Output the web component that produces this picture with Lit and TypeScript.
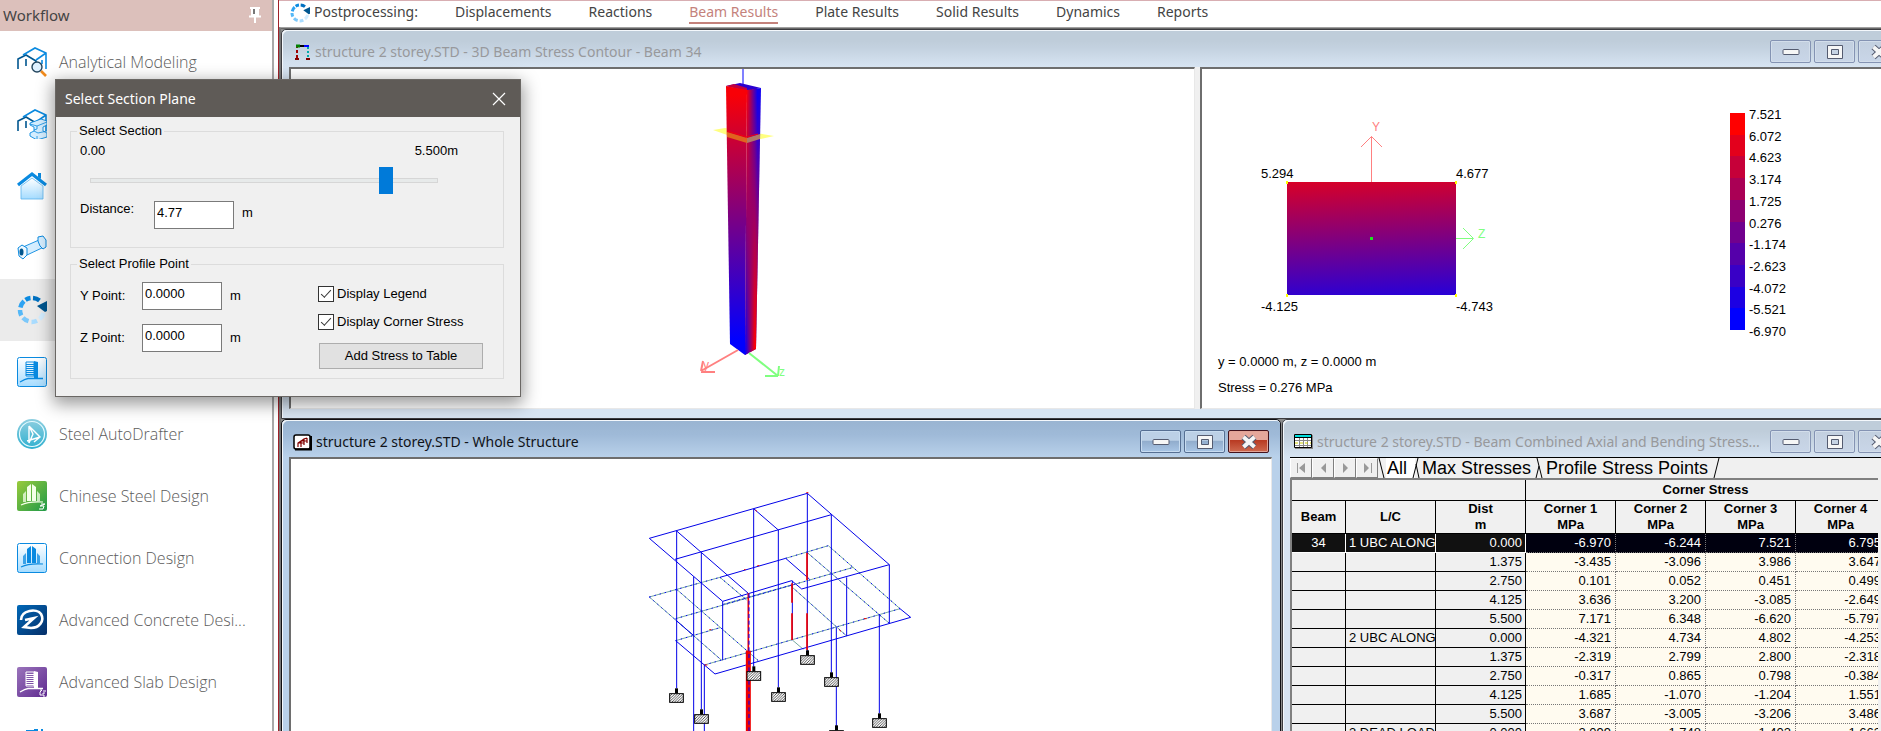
import { LitElement, html, css, svg } from "lit";
import { customElement, state } from "lit/decorators.js";

const BLUE = "#0a8ae0";

const frameIcon = svg`
  <path d="M1 22V12L9 8l10 6v8M9 12v7" stroke="#00568f" fill="none" stroke-width="1.6"/>
  <path d="M6 8L18 1l11 5v16M29 6l-10 7M25 13v4" stroke="${BLUE}" fill="none" stroke-width="1.6"/>`;

const ring = svg`
  <g fill="none" stroke-width="4.500">
    <path d="M8.500 4.800A12 12 0 0 1 13.500 3" stroke="${BLUE}"/>
    <path d="M16 3a12 12 0 0 1 6.500 2.500" stroke="#0070c0"/>
    <path d="M3.400 12.500A12 12 0 0 1 7 6.200" stroke="#2ea3f2"/>
    <path d="M4.200 20.500A12 12 0 0 1 3 15" stroke="#55b8f7"/>
    <path d="M11.500 26.200A12 12 0 0 1 6 22.800" stroke="#7cc8fa"/>
    <path d="M20 25.800a12 12 0 0 1-5.500 1.200" stroke="#a9dcff"/>
    <path d="M26.500 18a12 12 0 0 1-4 6" stroke="#d3edff"/>
  </g>
  <path d="M20 11l10-5v10l-2 1z" fill="#00568f"/>`;

const tile = (fill: string, stroke: string) =>
  svg`<rect x=".5" y=".5" width="29" height="29" rx="2" fill="${fill}" stroke="${stroke}"/>`;

const towers = (c: string) => svg`
  <path d="M10 20V6l4-3v17zM15 3l4 3v14h-4z" fill="${c}"/>
  <path d="M6 21v-8l3-3v11zM20 10l3 3v7l-3 .5z" fill="${c}" opacity=".75"/>
  <path d="M4 24q8-4 22-3" stroke="${c}" fill="none" stroke-width="1.200"/>`;

const slab = (c: string) => svg`
  <path d="M9 5h8v14H9z" fill="none" stroke="${c}"/>
  <path d="M9 7.500h8M9 9.500h8M9 11.500h8M9 13.500h8M9 15.500h8M9 17.500h8" stroke="${c}"/>
  <path d="M17 4l4 1v16h-4z" fill="${c}"/>
  <path d="M3 25q5-3 8-3.500h10l5 0" stroke="${c}" fill="none" stroke-width="1.300"/>`;

const icons: Record<string, unknown> = {
  analytical: svg`${frameIcon}
    <path d="M24 24l5 5" stroke="#f08a1c" stroke-width="2.600"/>
    <circle cx="20" cy="20" r="5" fill="#dff1ff" stroke="#24465e" stroke-width="1.400"/>`,
  physical: svg`${frameIcon}
    <path d="M13 14l11-4 6 2v4l-4 2v4l4 2v4l-10 3-7-4v-3l4-2v-4l-4-2z" fill="#d5eeff" stroke="${BLUE}" stroke-width=".9"/>
    <path d="M13 15l7 2 10-4M20 17v3l-3 1M17 22l4 2 9-2M20 27v3" stroke="${BLUE}" fill="none" stroke-width=".8"/>`,
  building: svg`
    <path d="M4 15L15 7l11 8v13H4z" fill="url(#ice)" stroke="#5cb4ee" stroke-width=".8"/>
    <path d="M1 14L15 3l14 11" stroke="${BLUE}" fill="none" stroke-width="3.200"/>
    <path d="M21 2h3v6l-3-2z" fill="${BLUE}"/>`,
  piping: svg`
    <path d="M6 14l16-7 5 7-17 8z" fill="#d5eeff" stroke="${BLUE}" stroke-width=".9"/>
    <path d="M21 4l5-1 3 4v7l-3 2-3-3-2-5z" fill="#d5eeff" stroke="${BLUE}"/>
    <path d="M1 15l4-3 5 3v7l-4 4-4-3z" fill="#eef8ff" stroke="${BLUE}"/>
    <ellipse cx="4.500" cy="19" rx="2" ry="3.500" fill="#00568f"/>`,
  post: ring,
  foundation: svg`${tile("url(#ice)", BLUE)}${slab(BLUE)}`,
  drafter: svg`
    <circle cx="15" cy="15" r="15" fill="url(#teal)"/>
    <circle cx="15" cy="15" r="12.500" fill="none" stroke="#e8fbff" stroke-width="1.200"/>
    <path d="M12 7v17l4-9zM12 7l11 11-6 5M10 22l13-4" fill="none" stroke="#fff" stroke-width="1.400"/>`,
  chinese: svg`<rect width="30" height="30" rx="2" fill="url(#green)"/>${towers("#f4ffe8")}
    <path d="M24 23h4l-5 2h4l-1 3h-4" stroke="#fff" fill="none"/>`,
  connection: svg`${tile("url(#ice)", BLUE)}${towers(BLUE)}`,
  concrete: svg`<rect width="30" height="30" rx="2" fill="url(#navy)"/>
    <path d="M4 15C4 5 20 3 24 9c4 7-2 14-10 14l-7-1 10-9-9 2" fill="none" stroke="#fff" stroke-width="2.600"/>`,
  slab: svg`<rect width="30" height="30" rx="2" fill="url(#violet)"/>${slab("#fff")}
    <path d="M23 23h2l-2 2v3h2M26 24h3M28 26h-2v3h2" stroke="#fff" fill="none"/>`,
  more: svg`<path d="M17 0h4v30H9V1h8z" fill="${BLUE}"/><path d="M24 0h2v30h-2z" fill="${BLUE}"/>`,
};

const icon = (name: string) => html`<svg class="icon" viewBox="0 0 30 30" aria-hidden="true">${icons[name]}</svg>`;

const workflow = [
  { icon: "analytical", label: "Analytical Modeling", shown: true },
  { icon: "physical", label: "Physical", shown: false },
  { icon: "building", label: "Building", shown: false },
  { icon: "piping", label: "Piping", shown: false },
  { icon: "post", label: "Postprocessing", shown: false, active: true },
  { icon: "foundation", label: "Foundation", shown: false },
  { icon: "drafter", label: "Steel AutoDrafter", shown: true },
  { icon: "chinese", label: "Chinese Steel Design", shown: true },
  { icon: "connection", label: "Connection Design", shown: true },
  { icon: "concrete", label: "Advanced Concrete Desi...", shown: true },
  { icon: "slab", label: "Advanced Slab Design", shown: true },
  { icon: "more", label: "More", shown: false },
];

const tabs = ["Displacements", "Reactions", "Beam Results", "Plate Results", "Solid Results", "Dynamics", "Reports"];

const legend = ["7.521", "6.072", "4.623", "3.174", "1.725", "0.276", "-1.174", "-2.623", "-4.072", "-5.521", "-6.970"];
const bands = ["#ff0000", "#e3001c", "#c60039", "#aa0055", "#8e0071", "#71008e", "#5500aa", "#3900c6", "#1c00e3", "#0000ff"];

const rows: string[][] = [
  ["34", "1 UBC ALONG", "0.000", "-6.970", "-6.244", "7.521", "6.795"],
  ["", "", "1.375", "-3.435", "-3.096", "3.986", "3.647"],
  ["", "", "2.750", "0.101", "0.052", "0.451", "0.499"],
  ["", "", "4.125", "3.636", "3.200", "-3.085", "-2.649"],
  ["", "", "5.500", "7.171", "6.348", "-6.620", "-5.797"],
  ["", "2 UBC ALONG", "0.000", "-4.321", "4.734", "4.802", "-4.253"],
  ["", "", "1.375", "-2.319", "2.799", "2.800", "-2.318"],
  ["", "", "2.750", "-0.317", "0.865", "0.798", "-0.384"],
  ["", "", "4.125", "1.685", "-1.070", "-1.204", "1.551"],
  ["", "", "5.500", "3.687", "-3.005", "-3.206", "3.486"],
  ["", "3 DEAD LOAD", "0.000", "2.099", "1.748", "-1.402", "-1.663"],
];

const beamScene = svg`
  <defs>
    <linearGradient id="left" gradientUnits="userSpaceOnUse" x1="736" y1="95" x2="742" y2="340">
      <stop offset="0" stop-color="#f80007"/><stop offset="1" stop-color="#0000ff"/>
    </linearGradient>
    <linearGradient id="rb" gradientUnits="userSpaceOnUse" x1="747" y1="0" x2="760" y2="0">
      <stop offset="0" stop-color="#f00010"/><stop offset=".8" stop-color="#1000f0"/>
    </linearGradient>
    <linearGradient id="br" gradientUnits="userSpaceOnUse" x1="745" y1="0" x2="756" y2="0">
      <stop offset="0" stop-color="#0000ff"/><stop offset=".9" stop-color="#ff0000"/>
    </linearGradient>
    <linearGradient id="fade" gradientUnits="userSpaceOnUse" x1="0" y1="95" x2="0" y2="350">
      <stop offset="0" stop-color="#000"/><stop offset="1" stop-color="#fff"/>
    </linearGradient>
    <mask id="down" maskUnits="userSpaceOnUse" x="700" y="70" width="80" height="300">
      <rect x="700" y="70" width="80" height="300" fill="url(#fade)"/>
    </mask>
  </defs>
  <g transform="translate(-291 -69)">
    <path d="M743 69v16" stroke="#8080ff" stroke-width="2"/>
    <path d="M713 130l12-2 49 8-27 6z" fill="#ffff80"/>
    <path d="M726 86l14-3 21 5-14 3z" fill="#2a00d0"/>
    <path d="M726 86l8-2 13 4v3z" fill="#c00040"/>
    <path d="M726 86l21 4-2 265-15-11z" fill="url(#left)"/>
    <path d="M747 90l14-2-5 261-11 6z" fill="url(#rb)"/>
    <path d="M747 90l14-2-5 261-11 6z" fill="url(#br)" mask="url(#down)"/>
    <path d="M727 132l20 6v5l-20-6z" fill="#e0641e"/>
    <path d="M747 138l13-4v5l-13 4z" fill="#b07868"/>
    <path d="M727 131l20 6 11-3" stroke="#f20010" stroke-width="1" fill="none"/>
    <path d="M738 350l-37 21M701 371l2-10M701 372h14" stroke="#ff8080" stroke-width="2" fill="none"/>
    <path d="M749 353l29 23M765 376h13M778 376l1-10" stroke="#80ff80" stroke-width="2" fill="none"/>
    <text x="703" y="369" class="axis" fill="#ff8080">y</text>
    <text x="779" y="376" class="axis" fill="#80ff80">z</text>
  </g>`;

const sectionScene = svg`
  <defs>
    <linearGradient id="section" gradientUnits="userSpaceOnUse" x1="1287" y1="182" x2="1292" y2="302">
      <stop offset="0" stop-color="#d80027"/><stop offset="1" stop-color="#2700d8"/>
    </linearGradient>
  </defs>
  <g transform="translate(-1202 -69)">
    <path d="M1371.500 136.500V182M1361 147l10.500-10.500L1382 147" stroke="#ff8080" fill="none"/>
    <path d="M1456 238.500h17M1463 228l10.500 10.500L1463 249" stroke="#80ff80" fill="none"/>
    <text x="1372" y="131" class="axis" fill="#ff8080">Y</text>
    <text x="1478" y="238" class="axis" fill="#80ff80">Z</text>
    <rect x="1287" y="182" width="169" height="113" fill="url(#section)"/>
    <path d="M1286 181h2v3h-2zM1455 181h2v3h-2zM1286 294h2v3h-2zM1455 294h2v3h-2z" fill="#ff0"/>
    <rect x="1370" y="237" width="3" height="3" fill="#20e020"/>
    <text x="1261" y="178">5.294</text>
    <text x="1456" y="178">4.677</text>
    <text x="1261" y="311">-4.125</text>
    <text x="1456" y="311">-4.743</text>
    <text x="1218" y="366">y = 0.0000 m, z = 0.0000 m</text>
    <text x="1218" y="392">Stress = 0.276 MPa</text>
    ${bands.map((c, i) => svg`<rect x="1730" y="${Math.round(113 + i * 21.7)}" width="15" height="22" fill="${c}"/>`)}
    ${legend.map((t, i) => svg`<text x="1749" y="${Math.round(119 + i * 21.7)}">${t}</text>`)}
  </g>`;

const supports = [[88, 670], [163, 733], [320, 604], [394, 667], [481, 556], [553, 622], [697, 745], [568, 781]];

const structureScene = svg`
  <defs>
    <pattern id="hatch" width="8" height="8" patternUnits="userSpaceOnUse">
      <rect width="8" height="8" fill="#fff"/>
      <path d="M-2 10L10 -2M-2 2L2 -2M6 10L10 6" stroke="#000" stroke-width="2"/>
    </pattern>
  </defs>
  <g transform="translate(349 11) scale(.33333)" fill="none" stroke-width="3">
    <path stroke="#74a8a0" d="M28 381L240 322M437 265L565 227L780 416M28 381L107 450L245 571M107 446L184 424L640 292M107 512L240 473M110 358L355 572M193 585L780 416M240 322L320 390M502 248L748 460M455 350L620 498M457 510L490 538M250 403L455 345"/>
    <path stroke="#0000ff" stroke-dasharray="4 12" d="M28 381L240 322M437 265L565 227L780 416M28 381L107 450L245 571M107 446L184 424L640 292M107 512L240 473M110 358L355 572M193 585L780 416M240 322L320 390M502 248L748 460M455 350L620 498M250 403L455 345"/>
    <path stroke="#0000e8" d="M28 205L502 70L748 284L485 357L455 332L248 394zM105 268L574 134M110 183L325 370M342 117L415 180M240 322L437 265L508 327M107 512L225 612L812 442L780 416M107 450L160 496M110 183V655M161 320V783M184 248V718M193 585V783M248 394V571M341 117V590M415 180V652M502 70V545M457 332V510M574 134V608M589 472V768M620 322V498M718 433V730M748 284V460"/>
    <path stroke="#f00000" stroke-width="5" d="M501 248V330M501 430V540M456 340V398M456 430V510M325 370V545"/>
    <path stroke="#f00000" stroke-width="15" d="M325 542V800"/>
    <path stroke="#0000ff" stroke-dasharray="12 8" d="M327 372V800"/>
    <path stroke="#f00000" d="M499 68h6M346 120l5 4M312 299h5M352 287h6M208 479h6M672 446h8M598 480l5 4M194 585h8"/>
    ${supports.map(
      ([x, y]) => svg`<path d="M${x + 17} ${y - 15}h9v15h-9z" fill="#000"/>
        <rect x="${x + 1}" y="${y + 1}" width="41" height="26" fill="url(#hatch)" stroke="#000"/>`
    )}
  </g>`;

@customElement("mdi-window")
export class MdiWindow extends LitElement {
  static properties = { heading: {}, active: { type: Boolean, reflect: true } };
  declare heading: string;
  declare active: boolean;

  static styles = css`
    :host { display: flex; flex-direction: column; min-width: 0; box-sizing: border-box; border: 1px solid #3c3c40; border-radius: 5px 5px 0 0; padding: 0 8px 9px 7px; background: #d7e4f2; box-shadow: inset 1px 1px #f4f8fc; font-family: "Noto Sans", "Open Sans", sans-serif; }
    :host([active]) { background: #b9d1ea; border-color: #101014; }
    .bar { height: 37px; box-sizing: border-box; margin: 0 -8px 0 -7px; padding: 6px 11px 0 11px; display: flex; align-items: center; gap: 4px; background: linear-gradient(#bfcdda 30%, #c4d2e0 50%, #d7e4f2); border-radius: 5px 5px 0 0; box-shadow: inset 1px 1px #f4f8fc; flex: none; }
    :host([active]) .bar { background: linear-gradient(#99b4d1, #9fbad8 40%, #b9d1ea); }
    .heading { flex: 1; min-width: 0; margin: 0; font-weight: 400; font-size: 14px; line-height: 20px; color: #98999c; white-space: nowrap; overflow: hidden; text-overflow: ellipsis; }
    :host([active]) .heading { color: #101318; }
    .controls { display: flex; gap: 3px; flex: none; }
    .control { width: 41px; height: 23px; padding: 0; display: grid; place-items: center; border: 1px solid #8493b3; border-radius: 2px; background: linear-gradient(#c2cfdf, #c9d6e8); box-shadow: inset 0 0 0 1px #d3deeb; }
    :host([active]) .control { border-color: #566f93; background: linear-gradient(#bcd0e6 45%, #90abcb 46%, #a9c6e6); box-shadow: inset 0 0 0 1px #c8dcf0; }
    :host([active]) .control.close { border-color: #43121c; background: linear-gradient(#e5a79b 42%, #b83a22 44%, #cf6a50); box-shadow: inset 0 0 0 1px #e2a497; }
  `;

  render() {
    return html`
      <header class="bar">
        <slot name="glyph"></slot>
        <h2 class="heading">${this.heading}</h2>
        <div class="controls">
          <button class="control" aria-label="Minimize"><svg width="18" height="8"><rect x="1" y="1.500" width="16" height="5" rx="1" fill="#f6f6f6" stroke="#545b70"/></svg></button>
          <button class="control" aria-label="Maximize"><svg width="18" height="16"><path fill-rule="evenodd" d="M1.500 1.500h15v13h-15zM5.500 5.500h7v5h-7z" fill="#f6f6f6" stroke="#545b70"/></svg></button>
          <button class="control close" aria-label="Close"><svg width="20" height="16"><path d="M4.500 3l11 10M15.500 3l-11 10" stroke="#545b70" stroke-width="6"/><path d="M4.500 3l11 10M15.500 3l-11 10" stroke="#f6f6f6" stroke-width="4"/></svg></button>
        </div>
      </header>
      <slot></slot>`;
  }
}

@customElement("section-dialog")
export class SectionDialog extends LitElement {
  @state() private distance = 4.77;

  static styles = css`
    :host { display: block; width: 466px; box-sizing: border-box; border: 1px solid #6a6764; background: #f0f0f0; box-shadow: 0 5px 16px 2px rgba(0, 0, 0, 0.4); font: 13px/16px "Liberation Sans", Arial, sans-serif; color: #000; }
    .title { height: 37px; padding: 0 14px 0 9px; display: flex; align-items: center; justify-content: space-between; background: #5f5b57; color: #fff; font-family: "Noto Sans", "Open Sans", sans-serif; }
    .name { margin: 0; font-size: 14px; line-height: 20px; font-weight: 400; }
    .shut { border: 0; padding: 0; background: none; width: 14px; height: 14px; }
    .shut svg { display: block; }
    .body { padding: 6px 16px 17px 14px; display: grid; gap: 8px; }
    .group { margin: 0; min-width: 0; border: 1px solid #dcdcdc; padding: 4px 9px 18px; }
    .group.points { padding: 10px 9px 8px; display: grid; grid-template-columns: 238px auto; justify-content: start; }
    .caption { padding: 0 2px; margin-left: -3px; }
    .ends { display: flex; justify-content: space-between; margin-right: 36px; }
    .slider { -webkit-appearance: none; appearance: none; display: block; width: 348px; height: 27px; margin: 8px 0 7px 10px; background: none; }
    .slider::-webkit-slider-runnable-track { height: 5px; box-sizing: border-box; border: 1px solid #d6d6d6; background: #e7eaea; }
    .slider::-webkit-slider-thumb { -webkit-appearance: none; width: 14px; height: 27px; margin-top: -12px; background: #007ad9; border-radius: 0; }
    .line { display: flex; gap: 8px; align-items: flex-start; }
    .line .unit { padding-top: 4px; }
    .line .lead { width: 66px; }
    .stack { display: grid; align-content: start; gap: 14px; }
    .stack .line { align-items: center; }
    .stack .unit { padding-top: 0; }
    .stack .lead { width: 54px; }
    .field { width: 80px; height: 28px; box-sizing: border-box; border: 1px solid #7a7a7a; background: #fff; padding: 0 2px 6px; font: inherit; color: #000; border-radius: 0; }
    .side { display: grid; align-content: start; padding-top: 4px; gap: 12px; }
    .check { display: flex; align-items: center; gap: 3px; height: 16px; }
    .box { -webkit-appearance: none; appearance: none; width: 16px; height: 16px; margin: 0; border: 1px solid #333; background: #fff; display: grid; place-items: center; }
    .box:checked::before { content: ""; width: 9px; height: 4px; border: solid #333; border-width: 0 0 1px 1px; transform: rotate(-47deg); margin-top: -3px; }
    .add { height: 26px; width: 164px; margin: 1px; box-sizing: border-box; border: 1px solid #adadad; background: #e1e1e1; font: inherit; color: #000; padding: 0; }
  `;

  private onSlide(e: Event) {
    this.distance = Number((e.target as HTMLInputElement).value);
  }

  render() {
    return html`
      <header class="title">
        <h2 class="name">Select Section Plane</h2>
        <button class="shut" aria-label="Close"><svg width="14" height="14"><path d="M1 1l12 12M13 1L1 13" stroke="#fff" stroke-width="1.200"/></svg></button>
      </header>
      <div class="body">
        <fieldset class="group">
          <legend class="caption">Select Section</legend>
          <div class="ends"><span>0.00</span><span>5.500m</span></div>
          <input class="slider" type="range" min="0" max="5.5" step="0.01" aria-label="Section distance" .value=${String(this.distance)} @input=${this.onSlide} />
          <div class="line">
            <label class="lead" for="distance">Distance:</label>
            <input class="field" id="distance" .value=${this.distance.toFixed(2)} />
            <span class="unit">m</span>
          </div>
        </fieldset>
        <fieldset class="group points">
          <legend class="caption">Select Profile Point</legend>
          <div class="stack">
            <div class="line"><label class="lead" for="yp">Y Point:</label><input class="field" id="yp" value="0.0000" /><span class="unit">m</span></div>
            <div class="line"><label class="lead" for="zp">Z Point:</label><input class="field" id="zp" value="0.0000" /><span class="unit">m</span></div>
          </div>
          <div class="side">
            <label class="check"><input class="box" type="checkbox" checked />Display Legend</label>
            <label class="check"><input class="box" type="checkbox" checked />Display Corner Stress</label>
            <button class="add">Add Stress to Table</button>
          </div>
        </fieldset>
      </div>`;
  }
}

@customElement("app-root")
export class AppRoot extends LitElement {
  static styles = css`
    :host { display: grid; grid-template-columns: 274px minmax(0, 1fr); gap: 4px; height: 100vh; position: relative; overflow: hidden; background: #fff; font-family: "Noto Sans", "Open Sans", sans-serif; color: #444; }
    svg { display: block; }
    .defs { position: absolute; width: 0; height: 0; }
    .workflow { border-right: 2px solid #a9a9a9; box-sizing: border-box; overflow: hidden; }
    .workflow-head { height: 31px; display: flex; align-items: center; justify-content: space-between; padding: 0 11px 2px 3px; box-sizing: border-box; background: #dcc0bb; line-height: 20px; }
    .workflow-name { margin: 0; font-size: 15px; font-weight: 400; color: #444; }
    .step { height: 62px; display: flex; align-items: center; gap: 12px; padding-left: 17px; color: #5c5c5c; font-family: "Open Sans", sans-serif; font-weight: 300; font-size: 16px; text-decoration: none; white-space: nowrap; }
    .step.active { background: #ebebeb; }
    .icon { width: 30px; height: 30px; flex: none; }
    .work { display: flex; flex-direction: column; min-width: 0; border-left: 1px solid #a02028; }
    .tabs { height: 27px; flex: none; box-sizing: border-box; border-top: 1px solid #d8aeb2; display: flex; align-items: flex-start; gap: 37px; padding-left: 11px; font-size: 14px; line-height: 20px; white-space: nowrap; }
    .module { display: flex; gap: 4px; padding-top: 1px; }
    .module .icon { width: 20px; height: 20px; margin-top: 1px; }
    .tab { color: #444; text-decoration: none; padding-top: 1px; border-bottom: 2px solid transparent; }
    .tab.active { color: #c4827c; border-color: #c4827c; }
    .desktop { flex: 1; min-height: 0; overflow: hidden; border-top: 1px solid #a0a0a0; border-left: 2px solid #777; box-shadow: inset 0 1px #696969; padding-top: 1px; margin-right: -30px; display: grid; column-gap: 1px; grid-template-columns: 1000fr 629fr; grid-template-rows: auto minmax(310px, 1fr); background: #8b8b8b; }
    .wide { grid-column: 1 / -1; }
    .split { display: grid; grid-template-columns: 907fr 5px 702fr; background: #f0f0f0; }
    .pane { border: 2px solid #6e6e6e; border-right-color: #e8e8e8; border-right-width: 1px; border-bottom: 1px solid #e8e8e8; background: #fff; min-width: 0; overflow: hidden; }
    .scene { width: 100%; height: 339px; font: 13px "Liberation Sans", Arial, sans-serif; fill: #000; }
    .axis { font-size: 12px; font-weight: 300; }
    .pane.tall { flex: 1; min-height: 0; }
    .sheet { flex: 1; min-height: 0; display: flex; flex-direction: column; background: #f0f0f0; font-family: "Liberation Sans", Arial, sans-serif; color: #000; overflow: hidden; }
    .sheets { display: flex; height: 21px; flex: none; border-top: 1px solid #000; box-sizing: border-box; font-size: 18px; line-height: 20px; }
    .move { width: 22px; height: 20px; padding: 0; border: 1px solid #fff; border-right-color: #808080; border-bottom-color: #808080; background: #f0f0f0; display: grid; place-items: center; flex: none; }
    .leaf { border: 0; padding: 0; margin: 0; background: none; font: inherit; color: #000; }
    .leaf.on { background: #fff; }
    .grid-box { flex: 1; min-height: 0; margin-right: 24px; border: 2px solid #808080; border-width: 2px 0 0 2px; overflow: hidden; background: #fffbf0; }
    .grid { border-collapse: separate; border-spacing: 0; table-layout: fixed; width: 594px; font-size: 13px; line-height: 16px; }
    .grid th, .grid td { box-sizing: border-box; padding: 0; border-right: 1px solid #000; border-bottom: 1px solid #000; white-space: nowrap; overflow: hidden; }
    .grid thead th { background: #f0f0f0; }
    .group-row th { height: 21px; }
    .head-row th { height: 33px; }
    .grid tbody tr { height: 19px; }
    .grid tbody th { font-weight: 400; background: #f0f0f0; text-align: left; padding-left: 3px; }
    .grid tbody th.beam { text-align: center; padding: 0; }
    .grid tbody th.dist { text-align: right; padding: 0 3px 0 0; }
    .grid td { text-align: right; padding-right: 4px; background: #fffbf0; border-right: 1px dotted #777; border-bottom: 1px dotted #777; }
    .grid tbody tr.current th { background: #111; color: #fff; border-right-color: #fff; border-bottom-color: #fff; }
    .grid tbody tr.current td { background: #00000f; color: #fff; }
    .dialog { position: absolute; left: 55px; top: 79px; z-index: 2; }
  `;

  render() {
    return html`
      ${this.swatches()}
      <aside class="workflow">
        <header class="workflow-head">
          <h1 class="workflow-name">Workflow</h1>
          <svg width="12" height="16"><path d="M1 1h10M3 1v8M9 1v8M0 9.500h12M6 10v6" stroke="#fff" stroke-width="2" fill="none"/><path d="M4 2h4v7H4z" fill="#fff"/><path d="M4 2h2v5H4z" fill="#777"/></svg>
        </header>
        <nav>
          ${workflow.map((s) => html`<a class="step ${s.active ? "active" : ""}" href="#" aria-label=${s.label}>${icon(s.icon)}${s.shown ? html`<span>${s.label}</span>` : ""}</a>`)}
        </nav>
      </aside>
      <main class="work">
        <nav class="tabs">
          <span class="module">${icon("post")}<span>Postprocessing:</span></span>
          ${tabs.map((t) => html`<a class="tab ${t === "Beam Results" ? "active" : ""}" href="#">${t}</a>`)}
        </nav>
        <div class="desktop">
          <mdi-window class="wide" heading="structure 2 storey.STD - 3D Beam Stress Contour - Beam 34">
            <svg slot="glyph" width="18" height="16"><path d="M4 1v14" stroke="#a00000" stroke-width="2" stroke-dasharray="3 2"/><path d="M3 2h4" stroke="#008000" stroke-width="3"/><path d="M7 2h5" stroke="#000" stroke-width="2"/><path d="M11 2h5" stroke="#00f" stroke-width="2"/><path d="M15 3v11" stroke="#0aa" stroke-dasharray="2 2" stroke-width="2"/><path d="M2 15h4M13 15h4" stroke="#800000" stroke-width="2"/></svg>
            <div class="split">
              <div class="pane"><svg class="scene">${beamScene}</svg></div>
              <span></span>
              <div class="pane"><svg class="scene">${sectionScene}</svg></div>
            </div>
          </mdi-window>
          <mdi-window active heading="structure 2 storey.STD - Whole Structure">
            <svg slot="glyph" width="19" height="18"><rect x="1" y="2" width="16" height="14" rx="2" fill="#fff" stroke="#000" stroke-width="1.500"/><path d="M2 16.500h16V3" stroke="#000" stroke-width="2" fill="none"/><path d="M5 14v-4l3-2M8 14V8l3-2M11 12V6l3-1M14 10V5M5 10h6M8 8h6" stroke="#800000" fill="none" stroke-width="1.200"/></svg>
            <div class="pane tall"><svg class="scene">${structureScene}</svg></div>
          </mdi-window>
          <mdi-window heading="structure 2 storey.STD - Beam Combined Axial and Bending Stress...">
            <svg slot="glyph" width="19" height="15"><path d="M1 1h18v14H1z" fill="#888"/><path d="M.5.500h17v13H.5z" fill="#fff" stroke="#000"/><path d="M1 1h16v2H1z" fill="#0dd"/><path d="M1 3.500h16" stroke="#000"/><path d="M1 6.500h16M1 11.500h16M5.500 4v9M9.500 4v9M13.500 4v9" stroke="#888"/><path d="M1 9h16" stroke="#cc0" stroke-dasharray="3 2"/></svg>
            <div class="sheet">
              <div class="sheets">
                ${["M14 3v10L8 8zM6 3h1v10H6z", "M13 3v10L8 8z", "M8 3v10l5-5z", "M7 3v10l5-5zM14 3h1v10h-1z"].map(
                  (d, i) => html`<button class="move" aria-label=${["First", "Previous", "Next", "Last"][i]}><svg width="20" height="16"><path d=${d} fill="#999"/></svg></button>`
                )}
                ${this.slash("M1 0L6 20", 9, "#f0f0f0", "#fff")}
                <button class="leaf on">All</button>
                ${this.slash("M11 0L6 20M9 6L12 20", 15, "#fff", "#f0f0f0")}
                <button class="leaf">Max Stresses</button>
                ${this.slash("M6 0L11 20M8 8L5 20", 15, "#f0f0f0", "#f0f0f0")}
                <button class="leaf">Profile Stress Points</button>
                ${this.slash("M11 0L6 20", 15, "#f0f0f0", "#f0f0f0")}
              </div>
              <div class="grid-box">
                <table class="grid">
                  <colgroup><col style="width:54px" /><col span="6" style="width:90px" /></colgroup>
                  <thead>
                    <tr class="group-row"><th colspan="3"></th><th colspan="4">Corner Stress</th></tr>
                    <tr class="head-row"><th>Beam</th><th>L/C</th><th>Dist<br />m</th>${[1, 2, 3, 4].map((n) => html`<th>Corner ${n}<br />MPa</th>`)}</tr>
                  </thead>
                  <tbody>
                    ${rows.map(
                      (r, i) => html`<tr class=${i === 0 ? "current" : ""}>
                        <th class="beam">${r[0]}</th><th>${r[1]}</th><th class="dist">${r[2]}</th>
                        ${r.slice(3).map((v) => html`<td>${v}</td>`)}
                      </tr>`
                    )}
                  </tbody>
                </table>
              </div>
            </div>
          </mdi-window>
        </div>
      </main>
      <section-dialog class="dialog" role="dialog" aria-label="Select Section Plane"></section-dialog>`;
  }

  private slash(d: string, width: number, left: string, right: string) {
    return html`<svg width=${width} height="20"><path d="M0 0h8v20H0z" fill=${left}/><path d="M8 0h8v20H8z" fill=${right}/><path d=${d} stroke="#000" fill="none"/></svg>`;
  }

  private swatches() {
    const ramp = (id: string, a: string, b: string, x2: string) =>
      svg`<linearGradient id=${id} x1="0" y1="0" x2=${x2} y2="1"><stop offset="0" stop-color=${a}/><stop offset="1" stop-color=${b}/></linearGradient>`;
    return html`<svg class="defs" aria-hidden="true">
      <defs>
        ${ramp("ice", "#ffffff", "#a5dcff", "0")}
        ${ramp("teal", "#8fcfe0", "#2fb0d0", "0")}
        ${ramp("green", "#9acb3c", "#1f9a48", "1")}
        ${ramp("navy", "#0068b8", "#062f68", "1")}
        ${ramp("violet", "#9a74bb", "#5f2a90", "1")}
      </defs>
    </svg>`;
  }
}
